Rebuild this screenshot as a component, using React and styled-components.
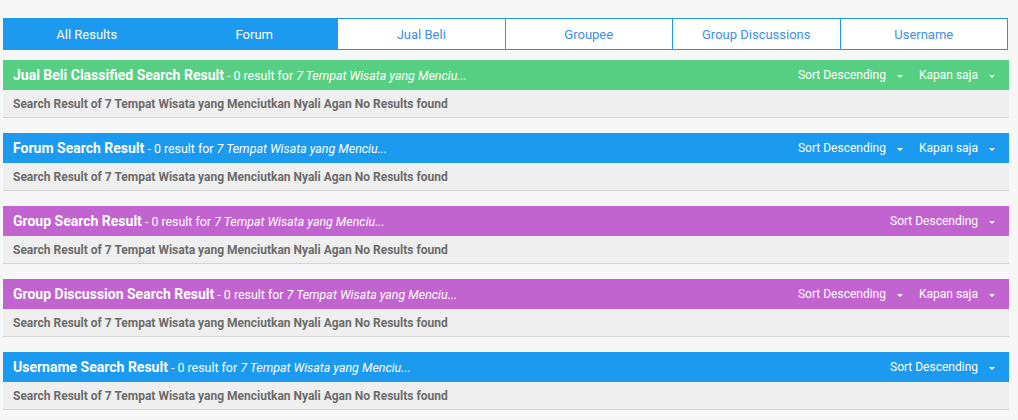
import React from 'react'
import styled, { createGlobalStyle } from 'styled-components'

const GlobalStyle = createGlobalStyle`
  body {
    margin: 0;
    background: #f7f7f7;
    font-family: Roboto, "Liberation Sans", sans-serif;
  }
`

const colors = {
  blue: '#1b9af0',
  green: '#57cf82',
  purple: '#c264d0',
}

const Page = styled.div`
  padding: 18px 10px 0 3px;
`

const Tabs = styled.div`
  display: grid;
  grid-template-columns: repeat(6, 1fr);
  height: 32px;
  width: 1005px;
`

const Tab = styled.div`
  display: flex;
  align-items: center;
  justify-content: center;
  font-size: 13px;
  padding-top: 1px;
  background: ${p => (p.$active ? colors.blue : '#fff')};
  color: ${p => (p.$active ? '#fff' : '#3d8fe6')};
  border: 1px solid ${colors.blue};
  border-left-width: ${p => (p.$active ? '1px' : '0')};
  box-sizing: border-box;
  cursor: pointer;
`

const List = styled.div`
  margin-top: 10px;
  width: 1006px;
`

const Section = styled.section`
  margin-bottom: 15px;
`

const Header = styled.div`
  display: flex;
  align-items: center;
  justify-content: space-between;
  height: 30px;
  padding: 0 14px 0 10px;
  background: ${p => p.$color};
  color: #fff;
`

const Title = styled.div`
  font-size: 12.4px;
  white-space: nowrap;
  strong {
    font-size: 14px;
    font-weight: 700;
  }
  em {
    font-style: italic;
  }
`

const Controls = styled.div`
  display: flex;
  align-items: center;
  gap: 16px;
`

const Dropdown = styled.div`
  display: flex;
  align-items: center;
  gap: 11px;
  font-size: 12px;
  cursor: pointer;
`

const Caret = styled.span`
  width: 0;
  height: 0;
  border-left: 3px solid transparent;
  border-right: 3px solid transparent;
  border-top: 3px solid #fff;
  margin-top: 2px;
`

const Body = styled.div`
  height: 27px;
  display: flex;
  align-items: center;
  padding-left: 10px;
  background: #efefef;
  border-bottom: 1px solid #d6d6d6;
  color: #6b6b6b;
  font-size: 12px;
  font-weight: 700;
`

const tabs = [
  { label: 'All Results', active: true },
  { label: 'Forum', active: true },
  { label: 'Jual Beli' },
  { label: 'Groupee' },
  { label: 'Group Discussions' },
  { label: 'Username' },
]

const query = '7 Tempat Wisata yang Menciutkan Nyali Agan'

const sections = [
  { title: 'Jual Beli Classified Search Result', color: colors.green, time: true },
  { title: 'Forum Search Result', color: colors.blue, time: true },
  { title: 'Group Search Result', color: colors.purple },
  { title: 'Group Discussion Search Result', color: colors.purple, time: true },
  { title: 'Username Search Result', color: colors.blue },
]

const App = () => {
  return (
    <Page>
      <GlobalStyle />
      <Tabs>
        {tabs.map(t => (
          <Tab key={t.label} $active={t.active}>{t.label}</Tab>
        ))}
      </Tabs>
      <List>
        {sections.map(s => (
          <Section key={s.title}>
            <Header $color={s.color}>
              <Title>
                <strong>{s.title}</strong> - 0 result for <em>7 Tempat Wisata yang Menciu...</em>
              </Title>
              <Controls>
                <Dropdown>Sort Descending <Caret /></Dropdown>
                {s.time && <Dropdown>Kapan saja <Caret /></Dropdown>}
              </Controls>
            </Header>
            <Body>Search Result of {query} No Results found</Body>
          </Section>
        ))}
      </List>
    </Page>
  )
}

export default App
